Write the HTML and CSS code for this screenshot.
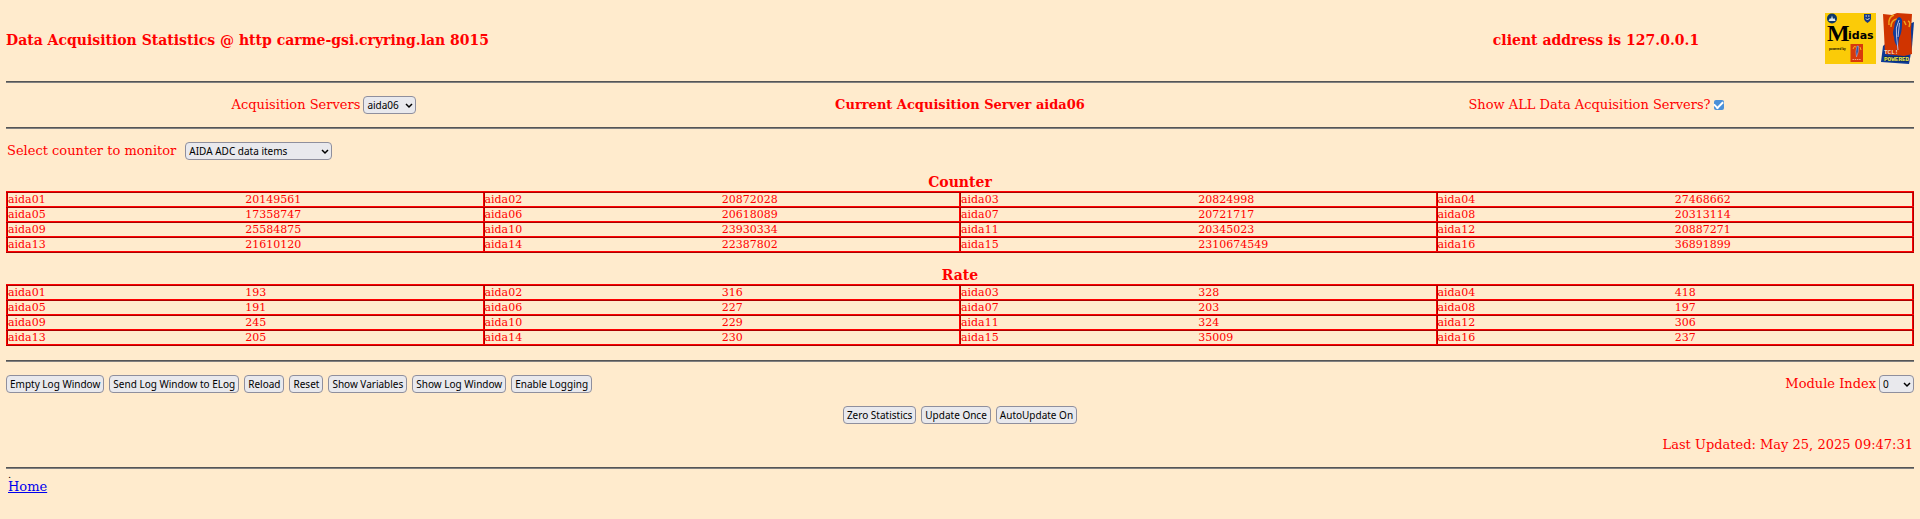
FILE: index.html
```
<!DOCTYPE html>
<html lang="en">
<head>
<meta charset="utf-8">
<title>Data Acquisition Statistics</title>
<link rel="stylesheet" href="styles.css">
</head>
<body>
<header class="thirds masthead">
  <h1 class="title">Data Acquisition Statistics @ http carme-gsi.cryring.lan 8015</h1>
  <div class="client">
    <h2 class="title">client address is 127.0.0.1</h2>
    <div class="logos">
      <svg class="logo-midas" viewBox="0 0 51 51" role="img" aria-label="Midas">
        <rect width="51" height="51" fill="#fbcb08"/>
        <circle cx="7" cy="5.5" r="5" fill="#0d3768"/>
        <path d="M3.5 8 L5 5 L6 6 L7 2.5 L8 6 L9.3 5 L10.5 8 Z" fill="#dfeaf0"/>
        <path d="M39 1 H46 V6 Q45.5 8.500 42.500 10 Q39.500 8.500 39 6 Z" fill="#173a86"/>
        <path d="M40.500 3 H42 M43 3 H44.500 M41 5.500 L42.500 7 L44.500 5" stroke="#e3e6dc" stroke-width="1" fill="none"/>
        <text x="2" y="28" class="midas-m">M</text>
        <text x="23" y="26" class="midas-rest">idas</text>
        <text x="4" y="37" class="midas-powered">powered by</text>
        <rect x="25.500" y="31" width="12.500" height="18" fill="#d8390b"/>
        <path d="M28 36 Q29 32 31 34 M35 34 L36 37" stroke="#f5b51c" fill="none"/>
        <path d="M32 33 Q30 39 31.500 44 Q34 39 33.500 33 Z" fill="#2b4fa0" stroke="#b4b8d8" stroke-width=".5"/>
        <path d="M27.500 46.500 H36" stroke="#f3a27a" stroke-width="1" stroke-dasharray="1.500 .7"/>
      </svg>
      <svg class="logo-tcl" viewBox="0 0 34 51" role="img" aria-label="Tcl Powered">
        <path d="M29 11 L34 9 L32 34 L29 51 L1 49 L3 33 Z" fill="#0b3a96"/>
        <path d="M3 1 L12 2 L17 0 L32 1 L31 18 L32 41 L24 43 L5 41 L4 20 Z" fill="#d03400"/>
        <path d="M9 12 Q8 4 14 2 M11 14 Q11 7 17 6 M24 8 L26 12 M28 8 Q31 9 29 14" fill="none" stroke="#f2a51b" stroke-width="1.500"/>
        <path d="M19 4 Q23 5 22 11 Q22 20 19 25 L18 34 Q14 30 14 24 Q12 20 14 15 Q15 6 19 4 Z" fill="#123d9c"/>
        <path d="M19 7 Q15 15 16.500 23 L18 37 M19.500 10 L18 24" fill="none" stroke="#b6bde0" stroke-width="1"/>
        <text x="4" y="41" class="tcl-text">TCL!</text>
        <path d="M4 43 H29 L28 49 L5 48 Z" fill="#0a2a6c"/>
        <text x="4" y="48" class="tcl-powered">POWERED</text>
      </svg>
    </div>
  </div>
</header>
<hr>
<form class="thirds servers">
  <div class="field">
    <label for="server">Acquisition Servers</label>
    <span class="picker">
      <select id="server"><option>aida06</option></select>
      <svg class="chevron" viewBox="0 0 8 6"><path d="M1 1 L4 4 L7 1"/></svg>
    </span>
  </div>
  <strong>Current Acquisition Server aida06</strong>
  <div class="field tick">
    <label for="all">Show ALL Data Acquisition Servers?</label>
    <input id="all" type="checkbox" checked>
  </div>
</form>
<hr>
<div class="field counter-field">
  <label for="counter">Select counter to monitor</label>
  <span class="picker wide">
    <select id="counter"><option>AIDA ADC data items</option></select>
    <svg class="chevron" viewBox="0 0 8 6"><path d="M1 1 L4 4 L7 1"/></svg>
  </span>
</div>
<table class="stats">
  <caption>Counter</caption>
  <tbody>
    <tr><td>aida01</td><td>20149561</td><td>aida02</td><td>20872028</td><td>aida03</td><td>20824998</td><td>aida04</td><td>27468662</td></tr>
    <tr><td>aida05</td><td>17358747</td><td>aida06</td><td>20618089</td><td>aida07</td><td>20721717</td><td>aida08</td><td>20313114</td></tr>
    <tr><td>aida09</td><td>25584875</td><td>aida10</td><td>23930334</td><td>aida11</td><td>20345023</td><td>aida12</td><td>20887271</td></tr>
    <tr><td>aida13</td><td>21610120</td><td>aida14</td><td>22387802</td><td>aida15</td><td>2310674549</td><td>aida16</td><td>36891899</td></tr>
  </tbody>
</table>
<table class="stats">
  <caption>Rate</caption>
  <tbody>
    <tr><td>aida01</td><td>193</td><td>aida02</td><td>316</td><td>aida03</td><td>328</td><td>aida04</td><td>418</td></tr>
    <tr><td>aida05</td><td>191</td><td>aida06</td><td>227</td><td>aida07</td><td>203</td><td>aida08</td><td>197</td></tr>
    <tr><td>aida09</td><td>245</td><td>aida10</td><td>229</td><td>aida11</td><td>324</td><td>aida12</td><td>306</td></tr>
    <tr><td>aida13</td><td>205</td><td>aida14</td><td>230</td><td>aida15</td><td>35009</td><td>aida16</td><td>237</td></tr>
  </tbody>
</table>
<hr>
<div class="toolbar">
  <div class="buttons">
    <button type="button">Empty Log Window</button>
    <button type="button">Send Log Window to ELog</button>
    <button type="button">Reload</button>
    <button type="button">Reset</button>
    <button type="button">Show Variables</button>
    <button type="button">Show Log Window</button>
    <button type="button">Enable Logging</button>
  </div>
  <div class="field">
    <label for="module">Module Index</label>
    <span class="picker small">
      <select id="module"><option>0</option></select>
      <svg class="chevron" viewBox="0 0 8 6"><path d="M1 1 L4 4 L7 1"/></svg>
    </span>
  </div>
</div>
<div class="buttons actions">
  <button type="button">Zero Statistics</button>
  <button type="button">Update Once</button>
  <button type="button">AutoUpdate On</button>
</div>
<p class="updated">Last Updated: May 25, 2025 09:47:31</p>
<hr>
<footer>
  <span class="dot">.</span>
  <a href="#">Home</a>
</footer>
</body>
</html>
```
FILE: styles.css
```
* {
  box-sizing: border-box;
}

body {
  margin: 0;
  padding: 13px 6px 0;
  background: #ffebcd;
  color: #f00;
  font: 13px/16px "DejaVu Serif", serif;
}

hr {
  height: 2px;
  margin: 0;
  border: 0;
  border-top: 1px solid #555;
  border-bottom: 1px solid #808080;
}

.thirds {
  display: grid;
  grid-template-columns: repeat(3, 1fr);
  align-items: center;
  justify-items: center;
}

.masthead {
  padding-bottom: 17px;
}

.title {
  margin: 0;
  padding-top: 2px;
  font-size: 14px;
  white-space: nowrap;
}

h1.title {
  grid-column: 1 / 3;
  justify-self: start;
}

.client {
  display: grid;
  grid-template-columns: 1fr auto 1fr;
  grid-column: 3;
  align-items: center;
  width: 100%;
}

.client .title {
  grid-column: 2;
}

.logos {
  display: flex;
  gap: 4px;
  justify-self: end;
}

.logo-midas {
  width: 51px;
  height: 51px;
}

.logo-tcl {
  width: 34px;
  height: 51px;
}

.midas-m {
  font: bold 24px "Liberation Serif", serif;
}

.midas-rest {
  font: bold 11px "DejaVu Sans", sans-serif;
}

.midas-powered {
  font: bold 3px "Liberation Sans", sans-serif;
}

.tcl-text {
  fill: #f6d9c4;
  font: bold 6px "Liberation Mono", monospace;
}

.tcl-powered {
  fill: #f2ea3a;
  font: bold 6px "Liberation Mono", monospace;
}

.servers {
  padding: 13px 0;
}

.field {
  display: flex;
  align-items: center;
  gap: 3px;
}

.counter-field {
  gap: 9px;
  padding: 13px 1px 14px;
}

.picker {
  position: relative;
  display: block;
  width: 53px;
}

.wide {
  width: 147px;
}

.small {
  width: 35px;
}

select,
button {
  height: 18px;
  border: 1px solid #8f8f9d;
  border-radius: 4px;
  background: #e9e9ed;
  color: #000;
  font: 10px/14px "Noto Sans", sans-serif;
}

select {
  display: block;
  width: 100%;
  padding: 0 3px;
  appearance: none;
}

.chevron {
  position: absolute;
  top: 7px;
  right: 3px;
  width: 8px;
  height: 6px;
  fill: none;
  stroke: #000;
  stroke-width: 1.5;
  pointer-events: none;
}

input[type="checkbox"] {
  display: grid;
  place-items: center;
  width: 10px;
  height: 10px;
  margin: 0;
  border-radius: 2px;
  background: #4a90d9;
  appearance: none;
}

input[type="checkbox"]::after {
  content: "";
  width: 7px;
  height: 4px;
  margin-bottom: 2px;
  border: solid #fff;
  border-width: 0 0 2px 2px;
  transform: rotate(-45deg);
}

.stats {
  width: 100%;
  margin-bottom: 14px;
  border: 2px ridge #f00;
  border-collapse: collapse;
  table-layout: fixed;
  font-size: 11px;
  line-height: 13px;
}

.stats caption {
  font-size: 14px;
  font-weight: bold;
  line-height: 17px;
}

.stats td {
  padding: 0;
  border-top: 2px ridge #f00;
  border-bottom: 2px ridge #f00;
}

.stats td:nth-child(odd) {
  border-left: 2px ridge #f00;
}

.toolbar {
  display: flex;
  justify-content: space-between;
  padding: 13px 0;
}

.buttons {
  display: flex;
  gap: 5px;
}

.actions {
  justify-content: center;
}

button {
  padding: 0 3px;
  white-space: nowrap;
}

.updated {
  margin: 0;
  padding: 13px 1px 14px;
  text-align: right;
}

footer {
  display: flex;
  flex-direction: column;
  align-items: flex-start;
  padding: 2px;
}

.dot {
  color: #000;
  font-size: 10px;
  line-height: 8px;
}

a {
  color: #00e;
}
```
